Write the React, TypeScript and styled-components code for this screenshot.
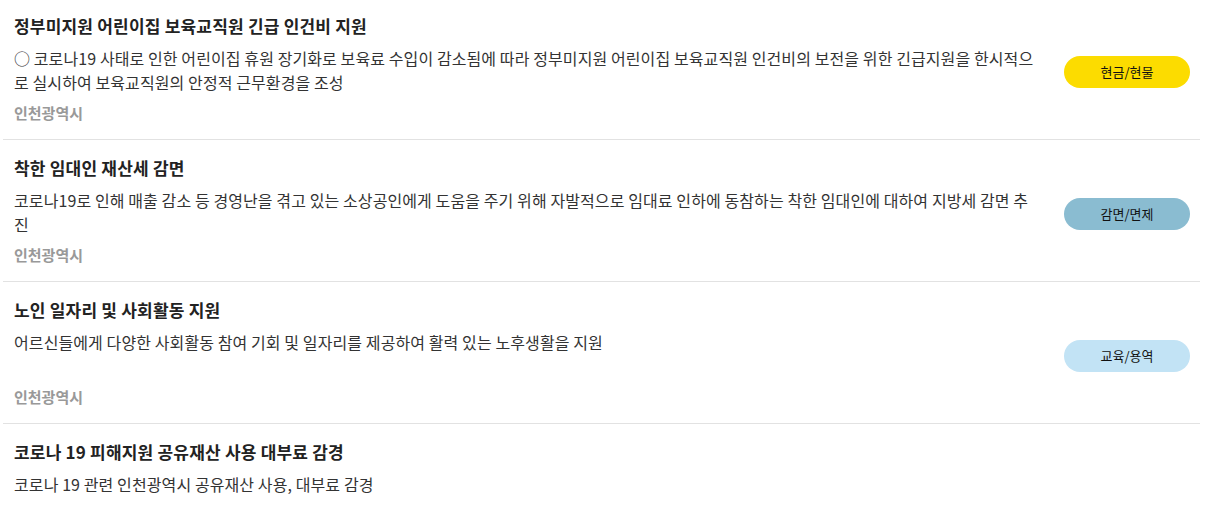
import React from "react";
import styled, { createGlobalStyle } from "styled-components";

const Global = createGlobalStyle`
  html, body { margin: 0; padding: 0; background: #fff; }
  body { font-family: "Noto Sans CJK KR", "Noto Sans", sans-serif; }
`;

const List = styled.ul`
  list-style: none;
  margin: -2px 8px 0 3px;
  padding: 0;
`;

const Item = styled.li`
  display: flex;
  align-items: center;
  gap: 24px;
  padding: 0 10px 0 11px;
  height: 141px;
  border-bottom: 1px solid #e2e2e2;
  &:last-child { border-bottom: none; }
`;

const Body = styled.div`
  flex: 1;
  min-width: 0;
  display: flex;
  flex-direction: column;
  align-self: flex-start;
  padding-top: 15px;
`;

const Title = styled.h3`
  margin: 0;
  font-size: 17px;
  font-weight: 700;
  line-height: 26px;
  letter-spacing: 0.2px;
  color: #222;
`;

const Desc = styled.p`
  margin: 7px 0 0;
  font-size: 16px;
  line-height: 24px;
  letter-spacing: 0.1px;
  color: #333;
  min-height: 48px;
  word-break: break-all;
`;

const Region = styled.span`
  margin-top: 9px;
  font-size: 15px;
  font-weight: 700;
  line-height: 20px;
  color: #999;
`;

const Badge = styled.span<{ $bg: string }>`
  flex: none;
  width: 126px;
  height: 32px;
  margin-top: 6px;
  border-radius: 16px;
  background: ${(p) => p.$bg};
  color: #111;
  font-size: 13px;
  display: flex;
  align-items: center;
  justify-content: center;
`;

type Entry = { title: string; desc: string; region: string; badge?: string; bg?: string };

const items: Entry[] = [
  {
    title: "정부미지원 어린이집 보육교직원 긴급 인건비 지원",
    desc: "○ 코로나19 사태로 인한 어린이집 휴원 장기화로 보육료 수입이 감소됨에 따라 정부미지원 어린이집 보육교직원 인건비의 보전을 위한 긴급지원을 한시적으로 실시하여 보육교직원의 안정적 근무환경을 조성",
    region: "인천광역시",
    badge: "현금/현물",
    bg: "#fcdc00",
  },
  {
    title: "착한 임대인 재산세 감면",
    desc: "코로나19로 인해 매출 감소 등 경영난을 겪고 있는 소상공인에게 도움을 주기 위해 자발적으로 임대료 인하에 동참하는 착한 임대인에 대하여 지방세 감면 추진",
    region: "인천광역시",
    badge: "감면/면제",
    bg: "#8abcd1",
  },
  {
    title: "노인 일자리 및 사회활동 지원",
    desc: "어르신들에게 다양한 사회활동 참여 기회 및 일자리를 제공하여 활력 있는 노후생활을 지원",
    region: "인천광역시",
    badge: "교육/용역",
    bg: "#c2e3f5",
  },
  {
    title: "코로나 19 피해지원 공유재산 사용 대부료 감경",
    desc: "코로나 19 관련 인천광역시 공유재산 사용, 대부료 감경",
    region: "인천광역시",
  },
];

export default function App() {
  return (
    <>
      <Global />
      <List>
        {items.map((it, i) => (
          <Item key={i}>
            <Body>
              <Title>{it.title}</Title>
              <Desc>{it.desc}</Desc>
              <Region>{it.region}</Region>
            </Body>
            {it.badge && it.bg ? <Badge $bg={it.bg}>{it.badge}</Badge> : null}
          </Item>
        ))}
      </List>
    </>
  );
}
